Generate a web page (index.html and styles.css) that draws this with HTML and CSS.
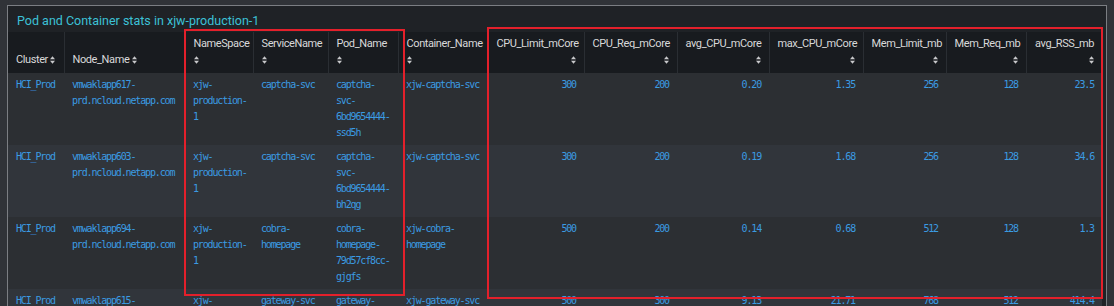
FILE: index.html
```html
<!DOCTYPE html>
<html>
<head>
<meta charset="utf-8">
<link rel="stylesheet" href="styles.css">
</head>
<body>
<div class="panel">
  <div class="panel-title">Pod and Container stats in xjw-production-1</div>
  <table class="stats">
    <colgroup>
      <col style="width:56px"><col style="width:121px"><col style="width:68px"><col style="width:75px"><col style="width:70px"><col style="width:90px"><col style="width:96px"><col style="width:93px"><col style="width:92px"><col style="width:94px"><col style="width:83px"><col style="width:80px"><col style="width:76px">
    </colgroup>
    <thead>
      <tr>
        <th>Cluster <svg class="sort" viewBox="0 0 6 9"><path d="M3 0L6 3.6H0Z M0 5.4H6L3 9Z"/></svg></th>
        <th>Node_Name <svg class="sort" viewBox="0 0 6 9"><path d="M3 0L6 3.6H0Z M0 5.4H6L3 9Z"/></svg></th>
        <th>NameSpace<br><svg class="sort" viewBox="0 0 6 9"><path d="M3 0L6 3.6H0Z M0 5.4H6L3 9Z"/></svg></th>
        <th>ServiceName<br><svg class="sort" viewBox="0 0 6 9"><path d="M3 0L6 3.6H0Z M0 5.4H6L3 9Z"/></svg></th>
        <th>Pod_Name<br><svg class="sort" viewBox="0 0 6 9"><path d="M3 0L6 3.6H0Z M0 5.4H6L3 9Z"/></svg></th>
        <th>Container_Name<br><svg class="sort" viewBox="0 0 6 9"><path d="M3 0L6 3.6H0Z M0 5.4H6L3 9Z"/></svg></th>
        <th class="num">CPU_Limit_mCore<br><svg class="sort" viewBox="0 0 6 9"><path d="M3 0L6 3.6H0Z M0 5.4H6L3 9Z"/></svg></th>
        <th class="num">CPU_Req_mCore<br><svg class="sort" viewBox="0 0 6 9"><path d="M3 0L6 3.6H0Z M0 5.4H6L3 9Z"/></svg></th>
        <th class="num">avg_CPU_mCore<br><svg class="sort" viewBox="0 0 6 9"><path d="M3 0L6 3.6H0Z M0 5.4H6L3 9Z"/></svg></th>
        <th class="num">max_CPU_mCore<br><svg class="sort" viewBox="0 0 6 9"><path d="M3 0L6 3.6H0Z M0 5.4H6L3 9Z"/></svg></th>
        <th class="num">Mem_Limit_mb<br><svg class="sort" viewBox="0 0 6 9"><path d="M3 0L6 3.6H0Z M0 5.4H6L3 9Z"/></svg></th>
        <th class="num">Mem_Req_mb<br><svg class="sort" viewBox="0 0 6 9"><path d="M3 0L6 3.6H0Z M0 5.4H6L3 9Z"/></svg></th>
        <th class="num">avg_RSS_mb<br><svg class="sort" viewBox="0 0 6 9"><path d="M3 0L6 3.6H0Z M0 5.4H6L3 9Z"/></svg></th>
      </tr>
    </thead>
    <tbody>
      <tr>
        <td>HCI_Prod</td>
        <td>vmwaklapp617-<br>prd.ncloud.netapp.com</td>
        <td>xjw-<br>production-<br>1</td>
        <td>captcha-svc</td>
        <td>captcha-<br>svc-<br>6bd9654444-<br>ssd5h</td>
        <td>xjw-captcha-svc</td>
        <td class="num">300</td>
        <td class="num">200</td>
        <td class="num">0.20</td>
        <td class="num">1.35</td>
        <td class="num">256</td>
        <td class="num">128</td>
        <td class="num">23.5</td>
      </tr>
      <tr>
        <td>HCI_Prod</td>
        <td>vmwaklapp603-<br>prd.ncloud.netapp.com</td>
        <td>xjw-<br>production-<br>1</td>
        <td>captcha-svc</td>
        <td>captcha-<br>svc-<br>6bd9654444-<br>bh2qg</td>
        <td>xjw-captcha-svc</td>
        <td class="num">300</td>
        <td class="num">200</td>
        <td class="num">0.19</td>
        <td class="num">1.68</td>
        <td class="num">256</td>
        <td class="num">128</td>
        <td class="num">34.6</td>
      </tr>
      <tr>
        <td>HCI_Prod</td>
        <td>vmwaklapp694-<br>prd.ncloud.netapp.com</td>
        <td>xjw-<br>production-<br>1</td>
        <td>cobra-<br>homepage</td>
        <td>cobra-<br>homepage-<br>79d57cf8cc-<br>gjgfs</td>
        <td>xjw-cobra-<br>homepage</td>
        <td class="num">500</td>
        <td class="num">200</td>
        <td class="num">0.14</td>
        <td class="num">0.68</td>
        <td class="num">512</td>
        <td class="num">128</td>
        <td class="num">1.3</td>
      </tr>
      <tr>
        <td>HCI_Prod</td>
        <td>vmwaklapp615-<br>prd.ncloud.netapp.com</td>
        <td>xjw-<br>production-<br>1</td>
        <td>gateway-svc</td>
        <td>gateway-<br>svc-<br>5c8f7d9b6d-<br>k2x9p</td>
        <td>xjw-gateway-svc</td>
        <td class="num">500</td>
        <td class="num">300</td>
        <td class="num">9.13</td>
        <td class="num">21.71</td>
        <td class="num">768</td>
        <td class="num">512</td>
        <td class="num">414.4</td>
      </tr>
    </tbody>
  </table>
</div>
<div class="mark mark-a"></div>
<div class="mark mark-b"></div>
</body>
</html>
```
FILE: styles.css
```css
html, body {
  margin: 0;
  padding: 0;
  height: 306px;
  overflow: hidden;
  background: #303338;
}
body {
  position: relative;
  padding-top: 5px;
  padding-left: 7px;
}
.panel {
  width: 1094px;
  padding-right: 4px;
  background: #1f2226;
  border-left: 1px solid #7b7e83;
  border-top: 1px solid #7b7e83;
  border-right: 1px solid #7b7e83;
  height: 320px;
}
.panel-title {
  height: 26px;
  line-height: 30px;
  padding-left: 9px;
  font-family: Roboto, "Liberation Sans", sans-serif;
  font-size: 12.5px;
  color: #3cc1d6;
  white-space: nowrap;
}
.stats {
  table-layout: fixed;
  width: 1094px;
  border-collapse: collapse;
  border-spacing: 0;
}
.stats th {
  background: #181b1f;
  color: #d8d9da;
  font-family: Roboto, "Liberation Sans", sans-serif;
  font-weight: 400;
  font-size: 11px;
  letter-spacing: -0.4px;
  line-height: 16px;
  text-align: left;
  vertical-align: bottom;
  padding: 4px 8px 5px 8px;
  border-left: 1px solid #2a2e33;
  white-space: nowrap;
}
.stats th:first-child { border-left: none; }
.stats th.num { text-align: right; }
.sort {
  width: 5px;
  height: 8px;
  fill: #c9cacc;
  vertical-align: -1px;
}
.stats td {
  font-family: "DejaVu Sans Mono", "Liberation Mono", monospace;
  font-size: 10px;
  letter-spacing: -1.15px;
  line-height: 16px;
  color: #3b9be2;
  vertical-align: top;
  padding: 4px 8px;
  white-space: nowrap;
  overflow: hidden;
}
.stats td.num { text-align: right; }
.stats tbody tr { height: 72px; }
.stats tbody tr:nth-child(odd) td { background: #2c2f33; }
.stats tbody tr:nth-child(even) td { background: #31353b; }
.mark {
  position: absolute;
  border: 2px solid #e3202b;
  box-sizing: border-box;
}
.mark-a { left: 184px; top: 29px; width: 221px; height: 267px; }
.mark-b { left: 487px; top: 27px; width: 616px; height: 272px; }
```
